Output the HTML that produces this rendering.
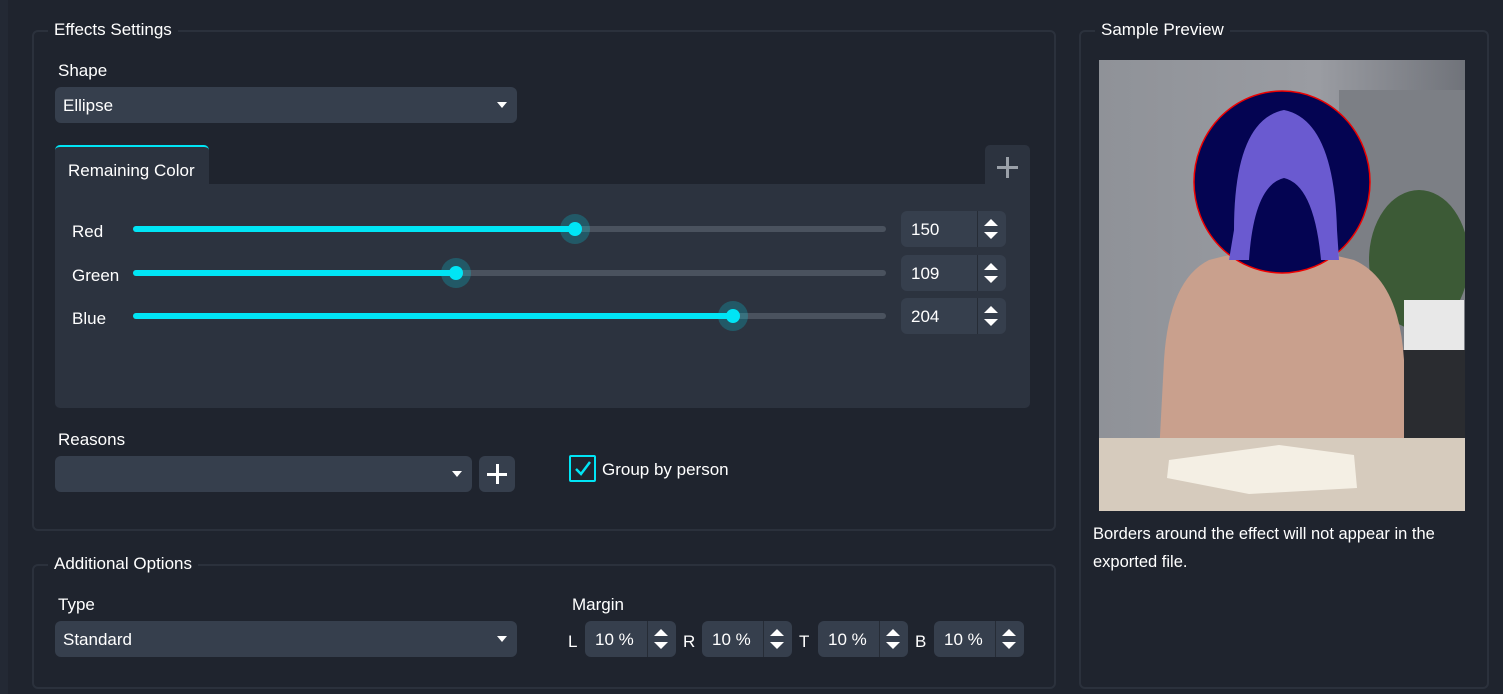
<!DOCTYPE html>
<html><head><meta charset="utf-8"><style>
*{box-sizing:border-box;margin:0;padding:0}
body{width:1503px;height:694px;background:#1f242e;font-family:"Liberation Sans",sans-serif;color:#fff;position:relative;overflow:hidden;font-size:17px}
.a{position:absolute}
.fs{position:absolute;border:2px solid #2b313c;border-radius:6px}
.lg{position:absolute;background:#1f242e;padding:0 6px;font-size:17px;line-height:20px}
.lbl{position:absolute;font-size:17px;line-height:20px}
.sel{position:absolute;background:#363f4d;border-radius:6px;height:36px;font-size:17px;line-height:37px;padding-left:8px}
.sel:after{content:"";position:absolute;right:10px;top:15px;border-left:5px solid transparent;border-right:5px solid transparent;border-top:6px solid #fff}
.spin{position:absolute;background:#363f4d;border-radius:6px;height:36px;font-size:17px;line-height:37px;padding-left:10px}
.spin .d{position:absolute;right:28px;top:0;bottom:0;width:1px;background:#262c36}
.spin .u{position:absolute;right:8px;top:8px;border-left:7px solid transparent;border-right:7px solid transparent;border-bottom:7px solid #fff}
.spin .w{position:absolute;right:8px;bottom:8px;border-left:7px solid transparent;border-right:7px solid transparent;border-top:7px solid #fff}
.tr{position:absolute;left:133px;width:753px;height:6px;border-radius:3px;background:#4a525e}
.tr i{position:absolute;left:0;top:0;height:6px;border-radius:3px;background:#00e5f5}
.th{position:absolute;width:30px;height:30px;border-radius:50%;background:rgba(0,229,245,.22)}
.th:after{content:"";position:absolute;left:8px;top:8px;width:14px;height:14px;border-radius:50%;background:#00e5f5}
</style></head><body>
<div class="a" style="left:0;top:0;width:8px;height:694px;background:#232934"></div>

<div class="fs" style="left:32px;top:30px;width:1024px;height:501px"></div>
<div class="lg" style="left:48px;top:20px">Effects Settings</div>
<div class="lbl" style="left:58px;top:61px">Shape</div>
<div class="sel" style="left:55px;top:87px;width:462px">Ellipse</div>

<div class="a" style="left:55px;top:145px;width:154px;height:40px;background:#2c333f;border-top:2px solid #00e5f5;border-radius:5px 5px 0 0"></div>
<div class="lbl" style="left:68px;top:161px">Remaining Color</div>
<div class="a" style="left:985px;top:145px;width:45px;height:40px;background:#2c333f;border-radius:5px 5px 0 0"></div>
<div class="a" style="left:997px;top:166px;width:21px;height:3px;background:#9aa0a8"></div>
<div class="a" style="left:1006px;top:157px;width:3px;height:21px;background:#9aa0a8"></div>
<div class="a" style="left:55px;top:184px;width:975px;height:224px;background:#2c333f;border-radius:0 0 5px 5px"></div>

<div class="lbl" style="left:72px;top:222px">Red</div>
<div class="tr" style="top:226px"><i style="width:442px"></i></div>
<div class="th" style="left:560px;top:214px"></div>
<div class="spin" style="left:901px;top:211px;width:105px">150<span class="d"></span><span class="u"></span><span class="w"></span></div>

<div class="lbl" style="left:72px;top:266px">Green</div>
<div class="tr" style="top:270px"><i style="width:323px"></i></div>
<div class="th" style="left:441px;top:258px"></div>
<div class="spin" style="left:901px;top:255px;width:105px">109<span class="d"></span><span class="u"></span><span class="w"></span></div>

<div class="lbl" style="left:72px;top:309px">Blue</div>
<div class="tr" style="top:313px"><i style="width:600px"></i></div>
<div class="th" style="left:718px;top:301px"></div>
<div class="spin" style="left:901px;top:298px;width:105px">204<span class="d"></span><span class="u"></span><span class="w"></span></div>

<div class="lbl" style="left:58px;top:430px">Reasons</div>
<div class="sel" style="left:55px;top:456px;width:417px"></div>
<div class="a" style="left:479px;top:456px;width:36px;height:36px;background:#363f4d;border-radius:6px"></div>
<div class="a" style="left:487px;top:473px;width:20px;height:3px;background:#fff"></div>
<div class="a" style="left:496px;top:464px;width:3px;height:20px;background:#fff"></div>
<div class="a" style="left:569px;top:455px;width:27px;height:27px;border:2px solid #00e5f5;border-radius:2px"></div>
<svg class="a" style="left:569px;top:455px" width="27" height="27"><path d="M7 14 L12 19 L21 7" stroke="#00e5f5" stroke-width="2.5" fill="none"/></svg>
<div class="lbl" style="left:602px;top:460px">Group by person</div>

<div class="fs" style="left:32px;top:564px;width:1024px;height:125px"></div>
<div class="lg" style="left:48px;top:554px">Additional Options</div>
<div class="lbl" style="left:58px;top:595px">Type</div>
<div class="sel" style="left:55px;top:621px;width:462px">Standard</div>
<div class="lbl" style="left:572px;top:595px">Margin</div>
<div class="lbl" style="left:568px;top:632px">L</div>
<div class="spin" style="left:585px;top:621px;width:91px">10 %<span class="d"></span><span class="u"></span><span class="w"></span></div>
<div class="lbl" style="left:683px;top:632px">R</div>
<div class="spin" style="left:702px;top:621px;width:90px">10 %<span class="d"></span><span class="u"></span><span class="w"></span></div>
<div class="lbl" style="left:799px;top:632px">T</div>
<div class="spin" style="left:818px;top:621px;width:90px">10 %<span class="d"></span><span class="u"></span><span class="w"></span></div>
<div class="lbl" style="left:915px;top:632px">B</div>
<div class="spin" style="left:934px;top:621px;width:90px">10 %<span class="d"></span><span class="u"></span><span class="w"></span></div>

<div class="fs" style="left:1079px;top:30px;width:410px;height:659px"></div>
<div class="lg" style="left:1095px;top:20px">Sample Preview</div>
<svg class="a" style="left:1099px;top:60px" width="366" height="451">
<defs><linearGradient id="bg" x1="0" x2="1"><stop offset="0" stop-color="#8f9298"/><stop offset=".6" stop-color="#9a9ca2"/><stop offset="1" stop-color="#70737a"/></linearGradient></defs>
<rect width="366" height="451" fill="url(#bg)"/>
<rect x="240" y="30" width="126" height="300" fill="#7c7f85"/>
<ellipse cx="320" cy="200" rx="50" ry="70" fill="#3c5a36"/>
<rect x="305" y="240" width="60" height="60" fill="#e8e8e8"/>
<rect x="290" y="290" width="76" height="100" fill="#2a2c30"/>
<path d="M110 200 Q180 180 255 200 Q300 220 305 300 L305 395 L60 395 L65 300 Q70 220 110 200 Z" fill="#c9a08d"/>
<rect x="0" y="378" width="366" height="73" fill="#d6cbbd"/>
<path d="M70 400 L180 385 L255 395 L258 428 L150 434 L68 418 Z" fill="#f4efe4"/>
<ellipse cx="183" cy="122" rx="88" ry="91" fill="#040452" stroke="#e00" stroke-width="1.5"/>
<path d="M135 170 Q135 60 185 50 Q235 60 238 170 L240 200 L222 200 Q215 125 185 118 Q155 125 150 200 L130 200 Z" fill="#6a5ad0"/>
</svg>
<div class="lbl" style="left:1093px;top:520px;font-size:16.5px;line-height:28px;width:390px">Borders around the effect will not appear in the exported file.</div>
</body></html>
